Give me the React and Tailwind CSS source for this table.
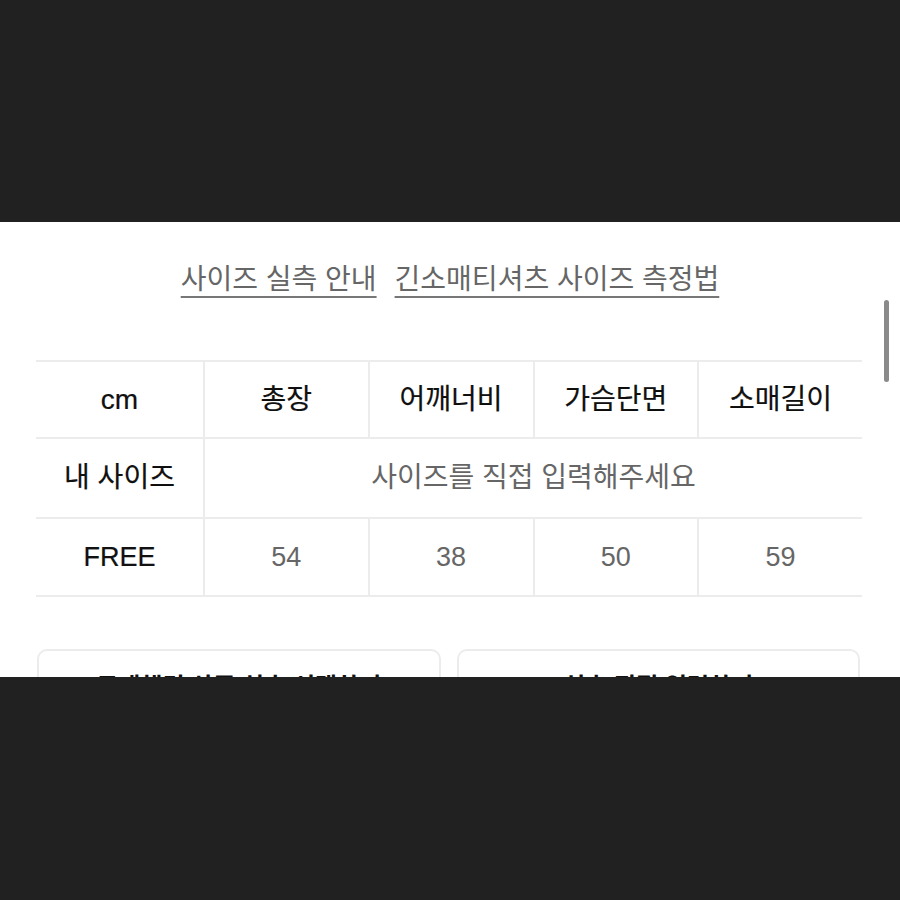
import React from 'react';

const font = { fontFamily: '"Liberation Sans", "Noto Sans CJK KR", sans-serif' };

const headers = ['총장', '어깨너비', '가슴단면', '소매길이'];
const free = ['54', '38', '50', '59'];

const Cell = ({ children, className = '' }) => (
    <div className={`flex items-center justify-center border-b-2 border-[#ececec] ${className}`}>
        {children}
    </div>
);

const App = () => {
    return (
        <div className="w-[900px] h-[900px] flex flex-col bg-[#212121] overflow-hidden" style={font}>
            <div className="h-[222px] shrink-0 bg-[#212121]" />

            <div className="relative h-[455px] shrink-0 bg-white overflow-hidden">
                {/* links */}
                <div className="flex justify-center gap-[18px] pt-[40px] text-[28px] leading-[36px] text-[#666]">
                    <span className="underline decoration-2 underline-offset-[7px] decoration-[#777]">사이즈 실측 안내</span>
                    <span className="underline decoration-2 underline-offset-[7px] decoration-[#777]">긴소매티셔츠 사이즈 측정법</span>
                </div>

                {/* scrollbar */}
                <div className="absolute right-[11px] top-[78px] w-[5px] h-[82px] rounded-full bg-[#8a8a8a]" />

                {/* size table */}
                <div className="mx-[36px] mr-[38px] mt-[62px] border-t-2 border-[#ececec] grid grid-cols-[167px_1fr_1fr_1fr_1fr]">
                    <Cell className="h-[77px] text-[28px] text-[#111] [-webkit-text-stroke:0.2px_black]">cm</Cell>
                    {headers.map((h) => (
                        <Cell key={h} className="h-[77px] border-l-2 text-[28px] text-[#111] [-webkit-text-stroke:0.2px_black]">{h}</Cell>
                    ))}

                    <Cell className="h-[80px] text-[28px] text-[#111] [-webkit-text-stroke:0.2px_black]">내 사이즈</Cell>
                    <Cell className="col-span-4 h-[80px] border-l-2 text-[28px] text-[#666]">사이즈를 직접 입력해주세요</Cell>

                    <Cell className="h-[78px] text-[27px] text-[#111] [-webkit-text-stroke:0.2px_black]">FREE</Cell>
                    {free.map((v) => (
                        <Cell key={v} className="h-[78px] border-l-2 text-[27px] text-[#666]">{v}</Cell>
                    ))}
                </div>

                {/* buttons */}
                <div className="mt-[52px] mx-[37px] mr-[40px] flex gap-[16px]">
                    <div className="flex-1 h-[80px] rounded-[10px] border-2 border-[#ececec] flex justify-center pt-[20px] text-[24px] leading-[32px] font-bold text-[#111]">
                        구매했던 상품 실측 선택하기
                    </div>
                    <div className="flex-1 h-[80px] rounded-[10px] border-2 border-[#ececec] flex justify-center pt-[20px] text-[24px] leading-[32px] font-bold text-[#111]">
                        실측 직접 입력하기
                    </div>
                </div>
            </div>

            <div className="flex-1 bg-[#212121]" />
        </div>
    );
};

export default App;
